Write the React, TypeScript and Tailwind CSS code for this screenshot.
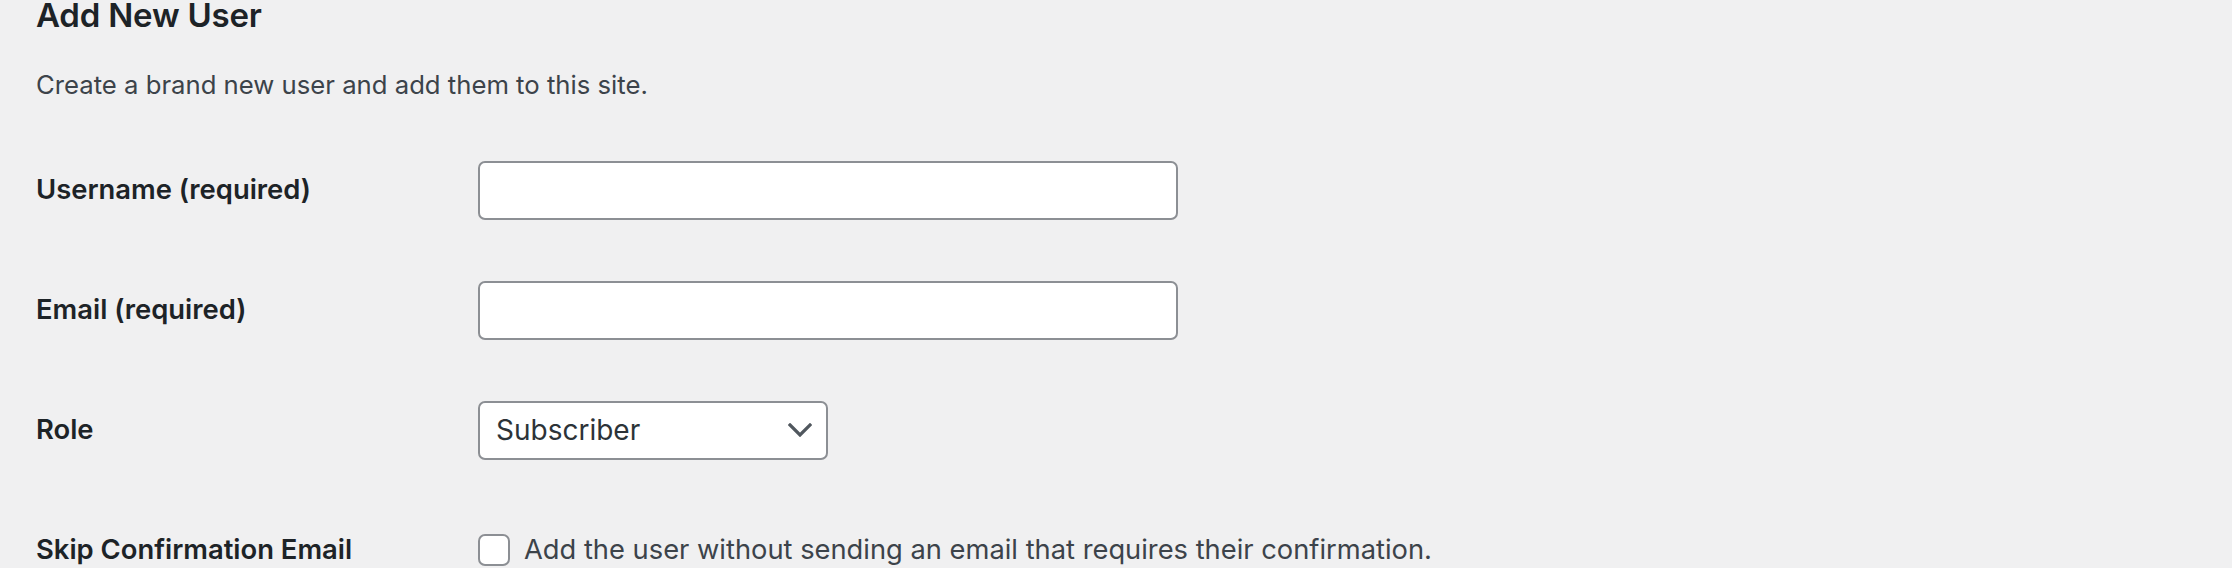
import React from "react";

const rows = [
  { label: "Username (required)", kind: "text" },
  { label: "Email (required)", kind: "text" },
  { label: "Role", kind: "select" },
  { label: "Skip Confirmation Email", kind: "checkbox" },
];

function ChevronDown() {
  return (
    <svg width="24" height="14" viewBox="0 0 24 14" fill="none" className="shrink-0">
      <path d="M2 2l10 10 10-10" stroke="#50575e" strokeWidth="3.2" strokeLinecap="square" />
    </svg>
  );
}

export default function App() {
  return (
    <div
      className="w-full h-[568px] overflow-hidden bg-[#f0f0f1] pl-[36px]"
      style={{ fontFamily: "Inter, 'Noto Sans', sans-serif" }}
    >
      <div className="h-[135px]">
        <h1 className="text-[33px] leading-[40px] font-semibold text-[#1d2327] -mt-[5px] tracking-[-0.2px]">
          Add New User
        </h1>
        <p className="mt-[32px] text-[25.7px] leading-[36px] text-[#3c434a]">
          Create a brand new user and add them to this site.
        </p>
      </div>

      <div className="grid grid-cols-[442px_1fr]">
        {rows.map((row) => (
          <React.Fragment key={row.label}>
            <div className="h-[120px] flex items-center text-[27.4px] font-semibold text-[#1d2327]">
              {row.label}
            </div>
            <div className="h-[120px] flex items-center">
              {row.kind === "text" && (
                <div className="w-[700px] h-[59px] bg-white border-2 border-[#8c8f94] rounded-[7px]" />
              )}
              {row.kind === "select" && (
                <div className="w-[350px] h-[59px] bg-white border-2 border-[#8c8f94] rounded-[7px] flex items-center justify-between pl-[16px] pr-[14px]">
                  <span className="text-[28px] text-[#2c3338]">Subscriber</span>
                  <ChevronDown />
                </div>
              )}
              {row.kind === "checkbox" && (
                <div className="flex items-center gap-[14px]">
                  <div className="w-[32px] h-[32px] bg-white border-2 border-[#8c8f94] rounded-[7px]" />
                  <span className="text-[27.3px] text-[#3c434a]">
                    Add the user without sending an email that requires their confirmation.
                  </span>
                </div>
              )}
            </div>
          </React.Fragment>
        ))}
      </div>
    </div>
  );
}
